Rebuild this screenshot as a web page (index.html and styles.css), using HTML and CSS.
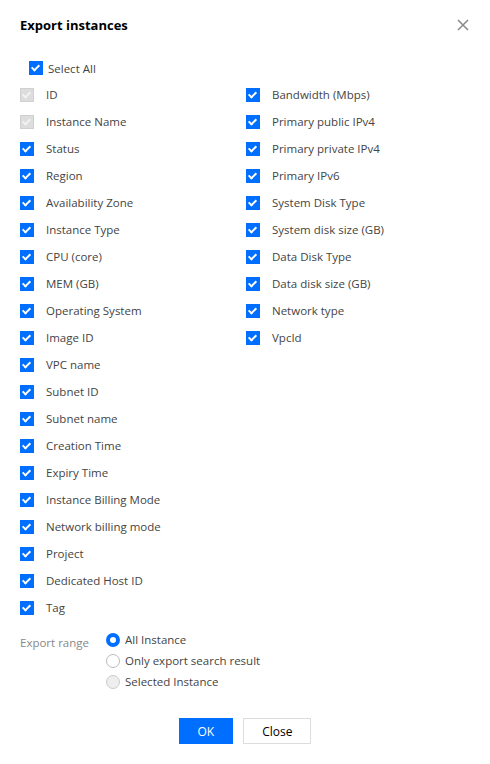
FILE: index.html
```html
<!DOCTYPE html>
<html lang="en">
<head>
    <meta charset="UTF-8">
    <title>Export instances</title>
    <link rel="stylesheet" href="styles.css">
</head>
<body>
    <div class="dialog">
        <div class="dialog-head">
            <h3>Export instances</h3>
            <button class="close-x" aria-label="close">
                <svg width="12" height="12" viewBox="0 0 12 12"><path d="M1 1L11 11M11 1L1 11" stroke="#888" stroke-width="1.5"/></svg>
            </button>
        </div>

        <label class="check select-all"><span class="box on"></span>Select All</label>

        <div class="columns">
            <div class="col">
                <label class="check"><span class="box off"></span>ID</label>
                <label class="check"><span class="box off"></span>Instance Name</label>
                <label class="check"><span class="box on"></span>Status</label>
                <label class="check"><span class="box on"></span>Region</label>
                <label class="check"><span class="box on"></span>Availability Zone</label>
                <label class="check"><span class="box on"></span>Instance Type</label>
                <label class="check"><span class="box on"></span>CPU (core)</label>
                <label class="check"><span class="box on"></span>MEM (GB)</label>
                <label class="check"><span class="box on"></span>Operating System</label>
                <label class="check"><span class="box on"></span>Image ID</label>
                <label class="check"><span class="box on"></span>VPC name</label>
                <label class="check"><span class="box on"></span>Subnet ID</label>
                <label class="check"><span class="box on"></span>Subnet name</label>
                <label class="check"><span class="box on"></span>Creation Time</label>
                <label class="check"><span class="box on"></span>Expiry Time</label>
                <label class="check"><span class="box on"></span>Instance Billing Mode</label>
                <label class="check"><span class="box on"></span>Network billing mode</label>
                <label class="check"><span class="box on"></span>Project</label>
                <label class="check"><span class="box on"></span>Dedicated Host ID</label>
                <label class="check"><span class="box on"></span>Tag</label>
            </div>
            <div class="col">
                <label class="check"><span class="box on"></span>Bandwidth (Mbps)</label>
                <label class="check"><span class="box on"></span>Primary public IPv4</label>
                <label class="check"><span class="box on"></span>Primary private IPv4</label>
                <label class="check"><span class="box on"></span>Primary IPv6</label>
                <label class="check"><span class="box on"></span>System Disk Type</label>
                <label class="check"><span class="box on"></span>System disk size (GB)</label>
                <label class="check"><span class="box on"></span>Data Disk Type</label>
                <label class="check"><span class="box on"></span>Data disk size (GB)</label>
                <label class="check"><span class="box on"></span>Network type</label>
                <label class="check"><span class="box on"></span>VpcId</label>
            </div>
        </div>

        <div class="range">
            <div class="range-label">Export range</div>
            <div class="radios">
                <label class="radio"><span class="dot on"></span>All Instance</label>
                <label class="radio"><span class="dot"></span>Only export search result</label>
                <label class="radio"><span class="dot off"></span>Selected Instance</label>
            </div>
        </div>

        <div class="footer">
            <button class="btn primary">OK</button>
            <button class="btn">Close</button>
        </div>
    </div>
</body>
</html>
```

FILE: styles.css
```css
/* base */
body {
    margin: 0;
    background: #fff;
    font-family: "Open Sans", "Noto Sans", Arial, sans-serif;
    font-size: 11.5px;
    color: #444;
}

.dialog {
    width: 490px;
    padding: 16px 20px 0;
    box-sizing: border-box;
}

/* header */
.dialog-head {
    display: flex;
    justify-content: space-between;
    align-items: center;
    height: 18px;
}

.dialog-head h3 {
    margin: 0;
    font-size: 13px;
    font-weight: 700;
    color: #000;
}

.close-x {
    border: none;
    background: none;
    padding: 0;
    margin-right: 1px;
    display: flex;
    cursor: pointer;
}

/* checkboxes */
.check {
    display: flex;
    align-items: center;
    height: 27px;
    gap: 12px;
}

.select-all {
    margin-top: 21px;
    padding-left: 9px;
    gap: 5px;
    height: 26px;
}

.box {
    width: 14px;
    height: 14px;
    box-sizing: border-box;
    flex: none;
    position: relative;
}

.box.on { background: #006eff; }
.box.off { background: #ddd; border: 1px solid #d0d0d0; }

.box::after {
    content: '';
    position: absolute;
    left: 4px;
    top: 2px;
    width: 3px;
    height: 6px;
    border: solid #fff;
    border-width: 0 2px 2px 0;
    transform: rotate(45deg);
}

.box.off::after { left: 3px; top: 1px; border-color: #f2f2f2; }

.columns {
    display: grid;
    grid-template-columns: 226px 1fr;
}

/* export range */
.range {
    display: flex;
    margin-top: 8px;
}

.range-label {
    width: 86px;
    color: #888;
    padding-top: 6px;
}

.radios {
    display: flex;
    flex-direction: column;
}

.radio {
    display: flex;
    align-items: center;
    gap: 5px;
    height: 21px;
}

.dot {
    width: 14px;
    height: 14px;
    border-radius: 50%;
    box-sizing: border-box;
    border: 1px solid #bbb;
    background: #fff;
}

.dot.on { border: 4px solid #006eff; }
.dot.off { background: #eee; border-color: #ccc; }

/* footer */
.footer {
    display: flex;
    justify-content: center;
    gap: 10px;
    margin-top: 26px;
}

.btn {
    height: 26px;
    min-width: 53px;
    padding: 0 18px;
    font-family: inherit;
    font-size: 12px;
    color: #000;
    background: #fff;
    border: 1px solid #ddd;
    cursor: pointer;
}

.btn.primary {
    background: #006eff;
    border-color: #006eff;
    color: #fff;
}
```
